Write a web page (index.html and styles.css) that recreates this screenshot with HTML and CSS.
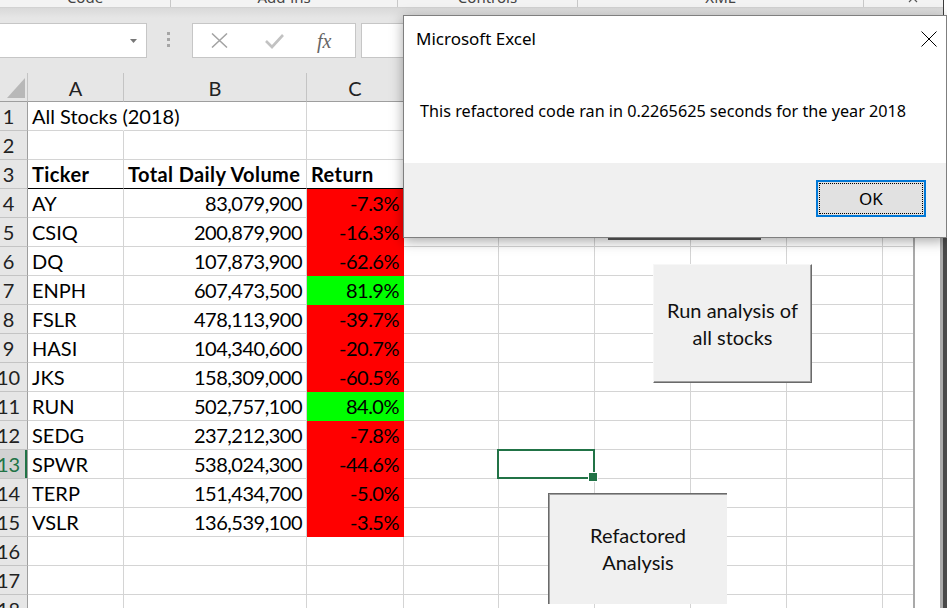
FILE: index.html
```html
<!DOCTYPE html>
<html lang="en">
<head>
<meta charset="utf-8">
<title>Excel - All Stocks (2018)</title>
<link rel="stylesheet" href="styles.css">
</head>
<body>
<div class="top">
  <div class="ribbon">
    <div class="rgroups">
      <div class="rg rg1">Code</div>
      <div class="rg rg2">Add-ins</div>
      <div class="rg rg3">Controls</div>
      <div class="rg rg4">XML</div>
      <div class="rg rg5"><svg width="10" height="6" viewBox="0 0 10 6"><polyline points="1,5 5,1 9,5" fill="none" stroke="#555" stroke-width="1.2"/></svg></div>
    </div>
  </div>
  <div class="fbar">
    <div class="namebox"><svg width="7" height="4" viewBox="0 0 7 4"><polygon points="0,0 7,0 3.5,4" fill="#777"/></svg></div>
    <div class="grip"><i></i><i></i><i></i></div>
    <div class="fbtns">
      <svg class="ic-x" width="17" height="15" viewBox="0 0 17 15"><path d="M1 0.5 L16 14.5 M16 0.5 L1 14.5" stroke="#a3a3a3" stroke-width="1.5" fill="none"/></svg>
      <svg class="ic-ok" width="19" height="16" viewBox="0 0 19 16"><polyline points="1,8 7,14 18,2" fill="none" stroke="#c2c2c2" stroke-width="2.6"/></svg>
      <span class="fx">fx</span>
    </div>
    <div class="finput"></div>
  </div>
</div>

<div class="sheet">
  <div class="grid">
    <div class="row hdr"><div class="corner"><svg width="18" height="20" viewBox="0 0 18 20"><polygon points="18,0 18,20 0,20" fill="#b8b8b8"/></svg></div><div>A</div><div>B</div><div>C</div><div>D</div><div>E</div><div>F</div><div>G</div><div>H</div><div></div></div>
    <div class="row"><div class="rh">1</div><div class="txt spill">All Stocks (2018)</div><div></div><div></div><div></div><div></div><div></div><div></div><div></div><div></div></div>
    <div class="row"><div class="rh">2</div><div></div><div></div><div></div><div></div><div></div><div></div><div></div><div></div><div></div></div>
    <div class="row"><div class="rh">3</div><div class="txt b hb">Ticker</div><div class="txt b hb">Total Daily Volume</div><div class="txt b hb">Return</div><div></div><div></div><div></div><div></div><div></div><div></div></div>
    <div class="row"><div class="rh">4</div><div class="txt">AY</div><div class="num">83,079,900</div><div class="num red">-7.3%</div><div></div><div></div><div></div><div></div><div></div><div></div></div>
    <div class="row"><div class="rh">5</div><div class="txt">CSIQ</div><div class="num">200,879,900</div><div class="num red">-16.3%</div><div></div><div></div><div></div><div></div><div></div><div></div></div>
    <div class="row"><div class="rh">6</div><div class="txt">DQ</div><div class="num">107,873,900</div><div class="num red">-62.6%</div><div></div><div></div><div></div><div></div><div></div><div></div></div>
    <div class="row"><div class="rh">7</div><div class="txt">ENPH</div><div class="num">607,473,500</div><div class="num grn">81.9%</div><div></div><div></div><div></div><div></div><div></div><div></div></div>
    <div class="row"><div class="rh">8</div><div class="txt">FSLR</div><div class="num">478,113,900</div><div class="num red">-39.7%</div><div></div><div></div><div></div><div></div><div></div><div></div></div>
    <div class="row"><div class="rh">9</div><div class="txt">HASI</div><div class="num">104,340,600</div><div class="num red">-20.7%</div><div></div><div></div><div></div><div></div><div></div><div></div></div>
    <div class="row"><div class="rh">10</div><div class="txt">JKS</div><div class="num">158,309,000</div><div class="num red">-60.5%</div><div></div><div></div><div></div><div></div><div></div><div></div></div>
    <div class="row"><div class="rh">11</div><div class="txt">RUN</div><div class="num">502,757,100</div><div class="num grn">84.0%</div><div></div><div></div><div></div><div></div><div></div><div></div></div>
    <div class="row"><div class="rh">12</div><div class="txt">SEDG</div><div class="num">237,212,300</div><div class="num red">-7.8%</div><div></div><div></div><div></div><div></div><div></div><div></div></div>
    <div class="row"><div class="rh on">13</div><div class="txt">SPWR</div><div class="num">538,024,300</div><div class="num red">-44.6%</div><div></div><div class="sel"></div><div></div><div></div><div></div><div></div></div>
    <div class="row"><div class="rh">14</div><div class="txt">TERP</div><div class="num">151,434,700</div><div class="num red">-5.0%</div><div></div><div></div><div></div><div></div><div></div><div></div></div>
    <div class="row"><div class="rh">15</div><div class="txt">VSLR</div><div class="num">136,539,100</div><div class="num red">-3.5%</div><div></div><div></div><div></div><div></div><div></div><div></div></div>
    <div class="row"><div class="rh">16</div><div></div><div></div><div></div><div></div><div></div><div></div><div></div><div></div><div></div></div>
    <div class="row"><div class="rh">17</div><div></div><div></div><div></div><div></div><div></div><div></div><div></div><div></div><div></div></div>
    <div class="row"><div class="rh">18</div><div></div><div></div><div></div><div></div><div></div><div></div><div></div><div></div><div></div></div>
  </div>
  <div class="vs"></div>
</div>

<div class="btn btn-hidden"></div>
<div class="btn btn-run"><span>Run analysis of</span><span>all stocks</span></div>
<div class="btn btn-ref"><span>Refactored</span><span>Analysis</span></div>

<div class="dlg">
  <div class="dlg-main">
    <div class="dlg-head">
      <span class="dlg-title">Microsoft Excel</span>
      <svg class="dlg-x" width="16" height="16" viewBox="0 0 16 16"><path d="M0.5 0.5 L15.5 15.5 M15.5 0.5 L0.5 15.5" stroke="#000" stroke-width="1" fill="none"/></svg>
    </div>
    <p class="dlg-msg">This refactored code ran in 0.2265625 seconds for the year 2018</p>
  </div>
  <div class="dlg-foot"><button class="ok">OK</button></div>
</div>
</body>
</html>
```
FILE: styles.css
```css
* { box-sizing: border-box; }

body {
  margin: 0;
  width: 947px;
  height: 608px;
  overflow: hidden;
  position: relative;
  background: #fff;
  color: #000;
  font-family: Lato, "Liberation Sans", sans-serif;
  font-size: 20px;
}

/* ---------- ribbon tail + formula bar ---------- */
.top {
  width: 944px;
  border-right: 1px solid #3d3d3d;
}

.ribbon {
  height: 8px;
  background: #f3f3f3;
  border-bottom: 1px solid #d2d2d2;
  overflow: hidden;
}

.rgroups {
  display: flex;
  height: 20px;
  margin-top: -13px;
}

.rg {
  flex-shrink: 0;
  border-right: 1px solid #c8c8c8;
  text-align: center;
  font: 15px/20px "Noto Sans", sans-serif;
  color: #444;
}
.rg1 { width: 171px; }
.rg2 { width: 227px; }
.rg3 { width: 180px; }
.rg4 { width: 286px; }
.rg5 {
  flex: 1;
  border-right: 0;
  display: flex;
  justify-content: flex-end;
  align-items: flex-end;
  padding: 0 25px 4px 0;
}

.fbar {
  height: 65px;
  display: flex;
  align-items: flex-start;
  padding-top: 15px;
  background: linear-gradient(#d9d9d9, #e6e6e6 10px);
}

.namebox {
  width: 161px;
  margin-left: -14px;
  height: 35px;
  background: #fff;
  border: 1px solid #c6c6c6;
  display: flex;
  justify-content: flex-end;
  align-items: center;
  padding-right: 9px;
}

.grip {
  width: 3px;
  margin: 9px 0 0 20px;
  display: flex;
  flex-direction: column;
  gap: 3px;
}
.grip i {
  display: block;
  width: 3px;
  height: 3px;
  background: #a6a6a6;
}

.fbtns {
  margin-left: 22px;
  width: 164px;
  height: 35px;
  background: #fff;
  border: 1px solid #c6c6c6;
  display: flex;
  align-items: center;
}
.ic-x { margin-left: 18px; }
.ic-ok { margin-left: 37px; }
.fx {
  margin-left: 33px;
  font: italic 20px/20px "Liberation Serif", serif;
  color: #666;
}

.finput {
  margin-left: 5px;
  flex: 1;
  height: 35px;
  background: #fff;
  border: 1px solid #c6c6c6;
}

/* ---------- sheet ---------- */
.sheet {
  display: flex;
  height: 535px;
}

.grid {
  width: 923px;
  margin-left: -10px;
  flex-shrink: 0;
  background: #fff;
}

.vs {
  flex: 1;
  border-left: 2px solid #a9a9a9;
  background: linear-gradient(to right, #fff 0 25px, #ababab 25px 28px, #4a4a4a 28px);
}

.row {
  display: flex;
  height: 29px;
}

.row > div {
  flex-shrink: 0;
  height: 29px;
  border-right: 1px solid #d4d4d4;
  border-bottom: 1px solid #d4d4d4;
  padding-top: 1px;
  line-height: 27px;
  white-space: nowrap;
}

.row > :nth-child(1) { width: 38px; }
.row > :nth-child(2) { width: 96px; }
.row > :nth-child(3) { width: 183px; }
.row > :nth-child(4) { width: 97px; }
.row > :nth-child(5) { width: 95px; }
.row > :nth-child(n+6) { width: 96px; }
.row > :nth-child(10) { width: 30px; border-right: 0; }

.hdr > div {
  background: #e6e6e6;
  border-right-color: #c4c4c4;
  border-bottom-color: #9e9e9e;
  text-align: center;
  padding-top: 2px;
  color: #222;
}

.hdr > .corner {
  display: flex;
  justify-content: flex-end;
  align-items: flex-end;
  padding: 0 2px 3px 0;
}

.row > .rh {
  background: #e6e6e6;
  border-right-color: #9e9e9e;
  border-bottom-color: #c4c4c4;
  text-align: center;
  color: #222;
}

.row > .rh.on {
  background: #d2d2d2;
  color: #217346;
  box-shadow: inset -2px 0 0 #217346;
}

.txt { padding-left: 4px; }
.num {
  text-align: right;
  padding-right: 4px;
  letter-spacing: -0.5px;
}
.b {
  font-weight: 700;
  letter-spacing: 0.4px;
}
.row > .hb { border-bottom-color: #000; }
.row > .spill { border-right-color: transparent; }

.row > .red {
  background: #ff0000;
  border-color: #ff0000;
}
.row > .grn {
  background: #00ff00;
  border-color: #00ff00;
}

.sel { position: relative; }
.sel::before {
  content: "";
  position: absolute;
  left: -2px;
  top: -1px;
  right: -1px;
  bottom: -1px;
  border: 2px solid #217346;
}
.sel::after {
  content: "";
  position: absolute;
  right: -4px;
  bottom: -4px;
  width: 8px;
  height: 8px;
  background: #217346;
  border: 1px solid #fff;
}

/* ---------- form buttons ---------- */
.btn {
  position: absolute;
  background: #f0f0f0;
  display: flex;
  flex-direction: column;
  align-items: center;
  justify-content: center;
  line-height: 27px;
  color: #111;
}

.btn-hidden {
  left: 608px;
  top: 150px;
  width: 153px;
  height: 90px;
  border-right: 1px solid #5a5a5a;
  border-bottom: 2px solid #5a5a5a;
}

.btn-run {
  left: 653px;
  top: 264px;
  width: 159px;
  height: 119px;
  border: 1px solid;
  border-color: #f7f7f7 #6a6a6a #6a6a6a #f7f7f7;
  box-shadow: inset -1px -1px 0 #a0a0a0;
}

.btn-ref {
  left: 548px;
  top: 493px;
  width: 179px;
  height: 111px;
  border-top: 1px solid #6a6a6a;
  border-left: 1px solid #6a6a6a;
  box-shadow: inset 1px 1px 0 #a0a0a0;
}

/* ---------- message box ---------- */
.dlg {
  position: absolute;
  left: 403px;
  top: 15px;
  width: 544px;
  height: 223px;
  border: 1px solid #7f7f7f;
  background: #fff;
  display: flex;
  flex-direction: column;
  box-shadow: 0 3px 12px rgba(0, 0, 0, 0.35);
  font-family: "Noto Sans", sans-serif;
  font-size: 17px;
  color: #000;
}

.dlg-main { height: 147px; }

.dlg-head {
  display: flex;
  justify-content: space-between;
  align-items: flex-start;
  padding: 11px 9px 0 12px;
}

.dlg-title { line-height: 23px; }
.dlg-x { margin-top: 4px; }

.dlg-msg {
  margin: 50px 0 0 16px;
  font-size: 16.2px;
  line-height: 23px;
}

.dlg-foot {
  flex: 1;
  background: #f0f0f0;
  display: flex;
  justify-content: flex-end;
  align-items: flex-start;
  padding: 17px 20px 0 0;
}

.ok {
  position: relative;
  width: 110px;
  height: 37px;
  padding: 0;
  border: 2px solid #0078d7;
  background: #e1e1e1;
  font: 17px "Noto Sans", sans-serif;
  color: #000;
}
.ok::after {
  content: "";
  position: absolute;
  inset: 1px;
  border: 1px dotted #000;
}
```
